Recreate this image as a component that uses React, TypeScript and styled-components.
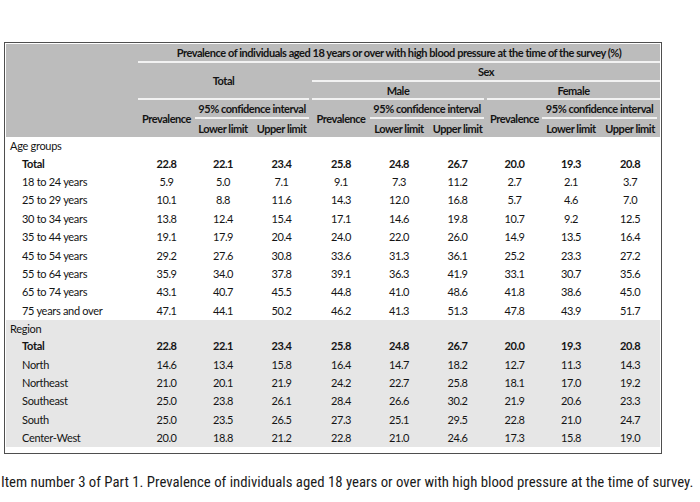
import React from 'react';
import styled, { createGlobalStyle } from 'styled-components';

const GlobalStyle = createGlobalStyle`
  body {
    margin: 0;
    background: #ffffff;
  }
`;

const Page = styled.div`
  width: 700px;
  height: 502px;
  padding: 42px 0 0 4px;
  box-sizing: border-box;
  overflow: hidden;
  font-family: "Lato", "Liberation Sans", sans-serif;
  color: #141414;
`;

const Frame = styled.div`
  width: 658px;
  box-sizing: border-box;
  border: 1px solid #4e4e4e;
  padding: 1px;
  background: #ffffff;
`;

const Table = styled.table`
  width: 100%;
  border-collapse: collapse;
  border-spacing: 0;
  table-layout: fixed;
  font-size: 11px;
  line-height: 13px;
`;

const Head = styled.thead`
  background: #bcbcbc;
  color: #141414;
`;

const HeadCell = styled.th<{ $h?: number }>`
  padding: 0;
  height: ${p => p.$h || 19}px;
  font-weight: 700;
  font-size: 11px;
  line-height: 13px;
  text-align: center;
  vertical-align: middle;
  letter-spacing: -0.45px;
  white-space: nowrap;
`;

const Ruled = styled.div<{ $gap?: number; $lh?: number }>`
  margin-right: ${p => p.$gap ?? 3}px;
  border-bottom: 2px solid #f2f2f2;
  line-height: ${p => p.$lh ?? 16}px;
  padding-top: 1px;
`;

const Section = styled.tbody<{ $shade?: boolean }>`
  background: ${p => (p.$shade ? '#e6e6e6' : '#ffffff')};
`;

const Row = styled.tr<{ $h?: number }>`
  height: ${p => p.$h ?? 18.4}px;
`;

const GroupLabel = styled.td`
  padding: 0 0 0 4px;
  text-align: left;
  letter-spacing: -0.3px;
`;

const Label = styled.td<{ $bold?: boolean }>`
  padding: 0 0 0 16px;
  text-align: left;
  font-weight: ${p => (p.$bold ? 700 : 400)};
  letter-spacing: -0.3px;
  white-space: nowrap;
`;

const Value = styled.td<{ $bold?: boolean }>`
  padding: 0;
  text-align: center;
  font-weight: ${p => (p.$bold ? 700 : 400)};
  letter-spacing: -0.4px;
`;

const Spacer = styled.tr`
  height: 5px;
`;

const Caption = styled.p`
  margin: 20px 0 0 -3px;
  font-family: "Roboto", "Liberation Sans", sans-serif;
  font-stretch: 80%;
  font-size: 14.8px;
  line-height: 16px;
  color: #1a1a1a;
  white-space: nowrap;
`;

const widths = [132, 57, 56, 61, 58, 58, 59, 55, 58, 60];

const ageRows: [string, string[]][] = [
  ['Total', ['22.8', '22.1', '23.4', '25.8', '24.8', '26.7', '20.0', '19.3', '20.8']],
  ['18 to 24 years', ['5.9', '5.0', '7.1', '9.1', '7.3', '11.2', '2.7', '2.1', '3.7']],
  ['25 to 29 years', ['10.1', '8.8', '11.6', '14.3', '12.0', '16.8', '5.7', '4.6', '7.0']],
  ['30 to 34 years', ['13.8', '12.4', '15.4', '17.1', '14.6', '19.8', '10.7', '9.2', '12.5']],
  ['35 to 44 years', ['19.1', '17.9', '20.4', '24.0', '22.0', '26.0', '14.9', '13.5', '16.4']],
  ['45 to 54 years', ['29.2', '27.6', '30.8', '33.6', '31.3', '36.1', '25.2', '23.3', '27.2']],
  ['55 to 64 years', ['35.9', '34.0', '37.8', '39.1', '36.3', '41.9', '33.1', '30.7', '35.6']],
  ['65 to 74 years', ['43.1', '40.7', '45.5', '44.8', '41.0', '48.6', '41.8', '38.6', '45.0']],
  ['75 years and over', ['47.1', '44.1', '50.2', '46.2', '41.3', '51.3', '47.8', '43.9', '51.7']],
];

const regionRows: [string, string[]][] = [
  ['Total', ['22.8', '22.1', '23.4', '25.8', '24.8', '26.7', '20.0', '19.3', '20.8']],
  ['North', ['14.6', '13.4', '15.8', '16.4', '14.7', '18.2', '12.7', '11.3', '14.3']],
  ['Northeast', ['21.0', '20.1', '21.9', '24.2', '22.7', '25.8', '18.1', '17.0', '19.2']],
  ['Southeast', ['25.0', '23.8', '26.1', '28.4', '26.6', '30.2', '21.9', '20.6', '23.3']],
  ['South', ['25.0', '23.5', '26.5', '27.3', '25.1', '29.5', '22.8', '21.0', '24.7']],
  ['Center-West', ['20.0', '18.8', '21.2', '22.8', '21.0', '24.6', '17.3', '15.8', '19.0']],
];

function Block({ title, rows, shade }: { title: string; rows: [string, string[]][]; shade?: boolean }) {
  return (
    <Section $shade={shade}>
      <Row $h={17}>
        <GroupLabel>{title}</GroupLabel>
        <td colSpan={9} />
      </Row>
      {rows.map(([name, vals]) => {
        const bold = name === 'Total';
        return (
          <Row key={name}>
            <Label $bold={bold}>{name}</Label>
            {vals.map((v, i) => (
              <Value key={i} $bold={bold}>{v}</Value>
            ))}
          </Row>
        );
      })}
      {shade && <Spacer />}
    </Section>
  );
}

export default function App() {
  const ci = (
    <HeadCell colSpan={2} $h={19}>
      <Ruled>95% confidence interval</Ruled>
    </HeadCell>
  );
  return (
    <Page>
      <GlobalStyle />
      <Frame>
        <Table>
          <colgroup>
            {widths.map((w, i) => (
              <col key={i} style={{ width: w }} />
            ))}
          </colgroup>
          <Head>
            <tr>
              <HeadCell rowSpan={5} />
              <HeadCell colSpan={9} $h={19}>
                <Ruled $gap={0}>
                  Prevalence of individuals aged 18 years or over with high blood pressure at the time of the survey (%)
                </Ruled>
              </HeadCell>
            </tr>
            <tr>
              <HeadCell colSpan={3} rowSpan={2}>
                <Ruled $lh={34}>Total</Ruled>
              </HeadCell>
              <HeadCell colSpan={6} $h={19}>
                <Ruled $gap={0}>Sex</Ruled>
              </HeadCell>
            </tr>
            <tr>
              <HeadCell colSpan={3} $h={18}>
                <Ruled $lh={15}>Male</Ruled>
              </HeadCell>
              <HeadCell colSpan={3} $h={18}>
                <Ruled $gap={0} $lh={15}>Female</Ruled>
              </HeadCell>
            </tr>
            <tr>
              <HeadCell rowSpan={2}>Prevalence</HeadCell>
              {ci}
              <HeadCell rowSpan={2}>Prevalence</HeadCell>
              {ci}
              <HeadCell rowSpan={2}>Prevalence</HeadCell>
              {ci}
            </tr>
            <tr>
              <HeadCell $h={18}>Lower limit</HeadCell>
              <HeadCell $h={18}>Upper limit</HeadCell>
              <HeadCell $h={18}>Lower limit</HeadCell>
              <HeadCell $h={18}>Upper limit</HeadCell>
              <HeadCell $h={18}>Lower limit</HeadCell>
              <HeadCell $h={18}>Upper limit</HeadCell>
            </tr>
          </Head>
          <Block title="Age groups" rows={ageRows} />
          <Block title="Region" rows={regionRows} shade />
        </Table>
      </Frame>
      <Caption>
        Item number 3 of Part 1. Prevalence of individuals aged 18 years or over with high blood pressure at the time of survey.
      </Caption>
    </Page>
  );
}
